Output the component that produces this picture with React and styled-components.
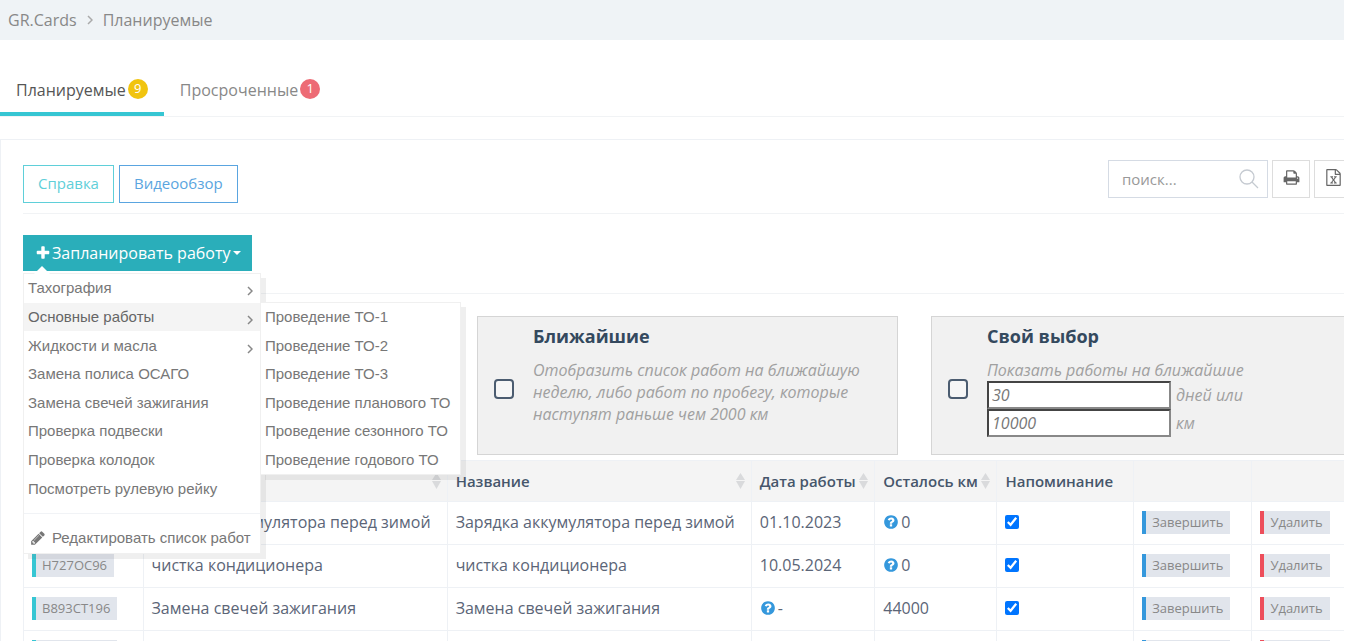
import React, { useState } from "react";
import styled, { createGlobalStyle } from "styled-components";

const ICONS = {
  plus: "M1600 736v192q0 40-28 68t-68 28h-416v416q0 40-28 68t-68 28h-192q-40 0-68-28t-28-68v-416h-416q-40 0-68-28t-28-68v-192q0-40 28-68t68-28h416v-416q0-40 28-68t68-28h192q40 0 68 28t28 68v416h416q40 0 68 28t28 68z",
  pencil: "M491 1536l91-91-235-235-91 91v107h128v128h107zm523-928q0-22-22-22-10 0-17 7l-542 542q-7 7-7 17 0 22 22 22 10 0 17-7l542-542q7-7 7-17zm-54-192l416 416-832 832h-416v-416zm683 96q0 53-37 90l-166 166-416-416 166-165q36-38 90-38 53 0 91 38l235 234q37 39 37 91z",
  print: "M448 1536h896v-256h-896v256zm0-640h896v-384h-160q-40 0-68-28t-28-68v-160h-640v640zm1152 64q0-26-19-45t-45-19-45 19-19 45 19 45 45 19 45-19 19-45zm128 0v416q0 13-9.500 22.500t-22.500 9.500h-224v160q0 40-28 68t-68 28h-960q-40 0-68-28t-28-68v-160h-224q-13 0-22.500-9.500t-9.500-22.500v-416q0-79 56.500-135.500t135.500-56.500h64v-544q0-40 28-68t68-28h672q40 0 88 20t76 48l152 152q28 28 48 76t20 88v256h64q79 0 135.500 56.500t56.500 135.500z",
  excel: "M1596 380q28 28 48 76t20 88v1152q0 40-28 68t-68 28h-1344q-40 0-68-28t-28-68v-1600q0-40 28-68t68-28h896q40 0 88 20t76 48zm-444-244v376h376q-10-29-22-41l-313-313q-12-12-41-22zm384 1528v-1024h-416q-40 0-68-28t-28-68v-416h-768v1536h1280zm-979-234v106h281v-106h-75l103-161q5-7 10-16.500t7.500-13.500 3.500-4h2q1 4 5 10 2 4 4.500 7.500t6 8 6.500 8.500l107 161h-76v106h291v-106h-68l-192-273 195-282h67v-107h-279v107h74l-103 159q-4 7-10 16.500t-9 13.500l-2 3h-2q-1-4-5-10-6-11-17-23l-106-159h76v-107h-290v107h68l189 272-194 283h-68z",
  question: "M1024 1376v-192q0-14-9-23t-23-9h-192q-14 0-23 9t-9 23v192q0 14 9 23t23 9h192q14 0 23-9t9-23zm256-672q0-88-55.500-163t-138.500-116-170-41q-243 0-371 213-15 24 8 42l132 100q7 6 19 6 16 0 25-12 53-68 86-92 34-24 86-24 48 0 85.500 26t37.500 59q0 38-20 61t-68 45q-63 28-115.500 86.500t-52.500 125.500v36q0 14 9 23t23 9h192q14 0 23-9t9-23q0-19 21.500-49.500t54.500-49.500q32-18 49-28.500t46-35 44.500-48 28-60.500 12.500-81zm384 192q0 209-103 385.500t-279.500 279.500-385.500 103-385.500-103-279.500-279.500-103-385.500 103-385.500 279.500-279.500 385.500-103 385.500 103 279.500 279.500 103 385.500z",
};

const menuItems = [
  { title: "Тахография", nested: true },
  { title: "Основные работы", nested: true },
  { title: "Жидкости и масла", nested: true },
  { title: "Замена полиса ОСАГО" },
  { title: "Замена свечей зажигания" },
  { title: "Проверка подвески" },
  { title: "Проверка колодок" },
  { title: "Посмотреть рулевую рейку" },
];

const subItems = [
  "Проведение ТО-1",
  "Проведение ТО-2",
  "Проведение ТО-3",
  "Проведение планового ТО",
  "Проведение сезонного ТО",
  "Проведение годового ТО",
];

const works = [
  { id: 1, plate: "", name: "Зарядка аккумулятора перед зимой", date: "01.10.2023", km: "0", kmHint: true },
  { id: 2, plate: "H727OC96", name: "чистка кондиционера", date: "10.05.2024", km: "0", kmHint: true },
  { id: 3, plate: "B893CT196", name: "Замена свечей зажигания", date: "-", dateHint: true, km: "44000" },
  { id: 4, plate: "B893CT196", name: "", date: "", km: "" },
];

function Icon({ name, size }) {
  return (
    <svg width={size} height={size} viewBox="0 0 1792 1792" fill="currentColor" aria-hidden="true">
      <path d={ICONS[name]} />
    </svg>
  );
}

function Angle() {
  return (
    <svg width="6" height="10" viewBox="0 0 6 10" fill="none" stroke="currentColor" strokeWidth="1.5" aria-hidden="true">
      <path d="M1 1l4 4-4 4" />
    </svg>
  );
}

function SortMark() {
  return (
    <svg width="9" height="16" viewBox="0 0 9 16" fill="#d9dadc" aria-hidden="true">
      <path d="M4.500 0L9 7H0zM4.500 16L9 8H0z" />
    </svg>
  );
}

function ScheduleMenu() {
  const [active, setActive] = useState("Основные работы");

  return (
    <Menu>
      <MenuList $height={229}>
        {menuItems.map((item) => (
          <li key={item.title}>
            <MenuLink href="#" $active={item.title === active} onMouseOver={() => setActive(item.title)}>
              {item.title}
              {item.nested && <Angle />}
            </MenuLink>
          </li>
        ))}
      </MenuList>
      <MenuFooter>
        <EditLink href="#">
          <Icon name="pencil" size={16} />
          Редактировать список работ
        </EditLink>
      </MenuFooter>
      {active === "Основные работы" && (
        <SubMenu>
          <MenuList $height={171}>
            {subItems.map((title) => (
              <li key={title}>
                <MenuLink href="#">{title}</MenuLink>
              </li>
            ))}
          </MenuList>
        </SubMenu>
      )}
    </Menu>
  );
}

function WorksTable() {
  return (
    <Table>
      <colgroup>
        <col style={{ width: "9%" }} />
        <col style={{ width: "22.9%" }} />
        <col style={{ width: "22.9%" }} />
        <col style={{ width: "9.3%" }} />
        <col style={{ width: "9.2%" }} />
        <col style={{ width: "10.3%" }} />
        <col style={{ width: "8.9%" }} />
        <col />
      </colgroup>
      <thead>
        <tr>
          <th></th>
          <th><HeadCell><span></span><SortMark /></HeadCell></th>
          <th><HeadCell>Название<SortMark /></HeadCell></th>
          <th><HeadCell>Дата работы<SortMark /></HeadCell></th>
          <th><HeadCell>Осталось км<SortMark /></HeadCell></th>
          <th><HeadCell>Напоминание</HeadCell></th>
          <th></th>
          <th></th>
        </tr>
      </thead>
      <tbody>
        {works.map((work) => (
          <tr key={work.id}>
            <td>{work.plate && <Tag href="#" $color="#36c6d3">{work.plate}</Tag>}</td>
            <td>{work.name}</td>
            <td>{work.name}</td>
            <td><Value>{work.dateHint && <Icon name="question" size={16} />}{work.date}</Value></td>
            <td><Value>{work.kmHint && <Icon name="question" size={16} />}{work.km}</Value></td>
            <td><Reminder type="checkbox" defaultChecked aria-label="Напоминание" /></td>
            <td><Tag as="button" $color="#3598dc">Завершить</Tag></td>
            <td><Tag as="button" $color="#ed4e5b">Удалить</Tag></td>
          </tr>
        ))}
      </tbody>
    </Table>
  );
}

export default function App() {
  return (
    <Viewport>
      <GlobalStyle />
      <Page>
        <Breadcrumb>
          <a href="#">GR.Cards</a>
          <Angle />
          <span>Планируемые</span>
        </Breadcrumb>

        <Tabs>
          <Tab href="#" $active>Планируемые<Badge $color="#f1c40f">9</Badge></Tab>
          <Tab href="#">Просроченные<Badge $color="#ed6b75">1</Badge></Tab>
        </Tabs>

        <Panel>
          <Toolbar>
            <Group>
              <OutlineButton $color="#5fcfd9">Справка</OutlineButton>
              <OutlineButton $color="#5aa5e0">Видеообзор</OutlineButton>
            </Group>
            <Tools>
              <SearchBox>
                <input type="text" placeholder="поиск..." aria-label="поиск" />
                <svg width="20" height="20" viewBox="0 0 20 20" fill="none" stroke="#c5cad1" strokeWidth="1.3" aria-hidden="true">
                  <circle cx="8" cy="8" r="7" />
                  <path d="M13 13l6 6" />
                </svg>
              </SearchBox>
              <IconButton aria-label="Печать"><Icon name="print" size={17} /></IconButton>
              <IconButton aria-label="Excel"><Icon name="excel" size={17} /></IconButton>
            </Tools>
          </Toolbar>

          <Actions>
            <Dropdown>
              <PrimaryButton>
                <Icon name="plus" size={16} />
                Запланировать работу
                <Caret />
              </PrimaryButton>
              <ScheduleMenu />
            </Dropdown>
          </Actions>

          <Cards>
            <Card />
            <Card>
              <BigCheck type="checkbox" id="nearest" />
              <div>
                <CardTitle htmlFor="nearest">Ближайшие</CardTitle>
                <CardText>
                  Отобразить список работ на ближайшую неделю, либо работ по пробегу, которые наступят раньше чем 2000 км
                </CardText>
              </div>
            </Card>
            <Card>
              <BigCheck type="checkbox" id="custom" />
              <div>
                <CardTitle htmlFor="custom">Свой выбор</CardTitle>
                <CardText>
                  Показать работы на ближайшие
                  <Field><input type="text" defaultValue="30" />дней или</Field>
                  <Field><input type="text" defaultValue="10000" />км</Field>
                </CardText>
              </div>
            </Card>
          </Cards>

          <WorksTable />
        </Panel>
      </Page>
    </Viewport>
  );
}

const GlobalStyle = createGlobalStyle`
  * {
    box-sizing: border-box;
  }

  body {
    margin: 0;
    background: #fff;
    color: #888;
    font-family: "Open Sans", sans-serif;
    font-size: 16px;
    line-height: 22px;
    overflow: hidden;
  }

  a {
    color: inherit;
    text-decoration: none;
  }

  button,
  input {
    font: inherit;
    color: inherit;
  }

  button {
    cursor: pointer;
  }

  svg {
    flex: none;
  }
`;

const Viewport = styled.div`
  height: calc(100vh - 3px);
  margin-right: 5px;
  overflow: hidden;
`;

/* the page is a little wider than the window and runs off its right edge */
const Page = styled.div`
  width: calc(100% + 31px);
`;

const Breadcrumb = styled.nav`
  display: flex;
  align-items: center;
  gap: 10px;
  height: 40px;
  padding: 0 8px;
  background: #eff3f6;

  svg {
    color: #aaa;
  }
`;

const Tabs = styled.nav`
  display: flex;
  height: 77px;
  padding-top: 28px;
  border-bottom: 1px solid #f1f3f5;
`;

const Tab = styled.a`
  display: flex;
  align-items: center;
  gap: 2px;
  padding: 0 16px;
  color: ${(props) => (props.$active ? "#555" : "#888")};
  border-bottom: 4px solid ${(props) => (props.$active ? "#36c6d3" : "transparent")};
`;

const Badge = styled.span`
  width: 20px;
  height: 20px;
  margin-bottom: 3px;
  border-radius: 50%;
  background: ${(props) => props.$color};
  color: #fff;
  font-size: 13px;
  line-height: 19px;
  text-align: center;
`;

const Panel = styled.main`
  margin-top: 22px;
  padding: 20px 22px;
  border: 1px solid #eef1f5;
`;

const Toolbar = styled.div`
  display: flex;
  justify-content: space-between;
  height: 54px;
  border-bottom: 1px solid #f1f3f5;
`;

const Group = styled.div`
  display: flex;
  align-items: flex-start;
  gap: 5px;
  padding-top: 5px;
`;

const Tools = styled.div`
  display: flex;
  align-items: flex-start;
  gap: 4px;
`;

const OutlineButton = styled.button`
  height: 38px;
  padding: 0 14px 2px;
  background: #fff;
  border: 1px solid ${(props) => props.$color};
  color: ${(props) => props.$color};
  font-size: 15px;
`;

const SearchBox = styled.label`
  display: flex;
  align-items: center;
  width: 160px;
  height: 38px;
  padding: 0 8px 0 13px;
  border: 1px solid #d5dbe4;

  input {
    flex: 1;
    min-width: 0;
    padding: 0;
    border: 0;
    outline: 0;
    font-size: 15px;
  }

  input::placeholder {
    color: #999;
  }
`;

const IconButton = styled.button`
  display: flex;
  align-items: center;
  justify-content: center;
  width: 38px;
  height: 38px;
  padding: 0 0 3px;
  background: #fff;
  border: 1px solid #ddd;
  color: #666;
`;

const Actions = styled.div`
  height: 80px;
  padding-top: 21px;
  border-bottom: 1px solid #f1f3f5;
`;

const Dropdown = styled.div`
  position: relative;
  display: inline-block;
`;

const PrimaryButton = styled.button`
  display: flex;
  align-items: center;
  gap: 1px;
  height: 36px;
  padding: 0 10px 0 11px;
  background: #2aaeba;
  border: 1px solid #2aaeba;
  color: #fff;
`;

const Caret = styled.span`
  margin-left: 2px;
  border: 4px solid transparent;
  border-top-color: #fff;
  border-bottom: 0;
`;

const Menu = styled.div`
  position: absolute;
  z-index: 2;
  top: 38px;
  left: 0;
  width: 238px;
  background: #fff;
  border: 1px solid #f0f0f0;
  box-shadow: 5px 5px rgba(102, 102, 102, 0.1);
  color: #777;
  font-family: "Liberation Sans", Arial, sans-serif;
  font-size: 15px;

  &::before {
    content: "";
    position: absolute;
    top: -8px;
    left: 10px;
    border: 8px solid transparent;
    border-top: 0;
    border-bottom-color: #fff;
  }
`;

const SubMenu = styled.div`
  position: absolute;
  top: 28px;
  left: 100%;
  width: 201px;
  background: #fff;
  border: 1px solid #f0f0f0;
  box-shadow: 5px 5px rgba(102, 102, 102, 0.1);
`;

const MenuList = styled.ul`
  display: grid;
  grid-auto-rows: 1fr;
  height: ${(props) => props.$height}px;
  margin: 0;
  padding: 0;
  list-style: none;
`;

const MenuLink = styled.a`
  display: flex;
  align-items: center;
  justify-content: space-between;
  height: 100%;
  padding: 0 7px 0 4px;
  background: ${(props) => (props.$active ? "#f4f4f4" : "transparent")};
  color: ${(props) => (props.$active ? "#666" : "#777")};
  white-space: nowrap;

  svg {
    margin-top: 6px;
    color: #888;
  }
`;

const MenuFooter = styled.div`
  margin-top: 10px;
  padding: 10px 4px 2px 6px;
  border-top: 1px solid #f1f3f6;
`;

const EditLink = styled.a`
  display: flex;
  align-items: center;
  gap: 6px;
  height: 27px;
  white-space: nowrap;
`;

const Cards = styled.div`
  display: grid;
  grid-template-columns: repeat(3, 1fr);
  gap: 33px;
  margin-top: 22px;
`;

const Card = styled.section`
  display: flex;
  align-items: center;
  gap: 19px;
  min-height: 139px;
  padding: 0 16px;
  background: #f1f1f1;
  border: 1px solid #d5d5d5;

  > div {
    flex: 1;
    align-self: flex-start;
    padding-top: 8px;
  }
`;

const BigCheck = styled.input`
  appearance: none;
  flex: none;
  width: 20px;
  height: 20px;
  margin: 6px 0 0;
  background: #f6f6f6;
  border: 2px solid #4b5c70;
  border-radius: 4px;
`;

const CardTitle = styled.label`
  display: block;
  color: #34495e;
  font-size: 18px;
  font-weight: 700;
`;

const CardText = styled.div`
  margin-top: 12px;
  color: #a0a0a0;
  font-style: italic;
`;

const Field = styled.label`
  display: flex;
  align-items: center;
  gap: 5px;

  input {
    width: 184px;
    height: 28px;
    padding: 0 3px;
    background: #fff;
    border: 2px solid #888;
    border-top-color: #444;
    border-left-color: #444;
    color: #777;
  }
`;

const Table = styled.table`
  width: 100%;
  margin-top: 5px;
  table-layout: fixed;
  border-collapse: collapse;
  color: #5b6577;

  th,
  td {
    height: 43px;
    padding: 0 8px 2px;
    border: 1px solid #eef1f5;
    text-align: left;
    white-space: nowrap;
  }

  th {
    height: 41px;
    padding: 0 6px 0 8px;
    background: #f4f4f4;
    color: #46566b;
    font-size: 15px;
    font-weight: 600;
  }
`;

const HeadCell = styled.div`
  display: flex;
  align-items: center;
  justify-content: space-between;
`;

const Value = styled.span`
  display: flex;
  align-items: center;
  gap: 2px;

  svg {
    color: #3598dc;
  }
`;

const Reminder = styled.input`
  display: block;
  width: 14px;
  height: 14px;
  margin: 0;
  accent-color: #0075ff;
`;

const Tag = styled.a`
  display: inline-block;
  height: 23px;
  padding: 0 7px 0 6px;
  background: #e1e5ec;
  border: 0;
  border-left: 4px solid ${(props) => props.$color};
  color: #888;
  font-size: 13px;
  line-height: 23px;
  vertical-align: middle;
`;
